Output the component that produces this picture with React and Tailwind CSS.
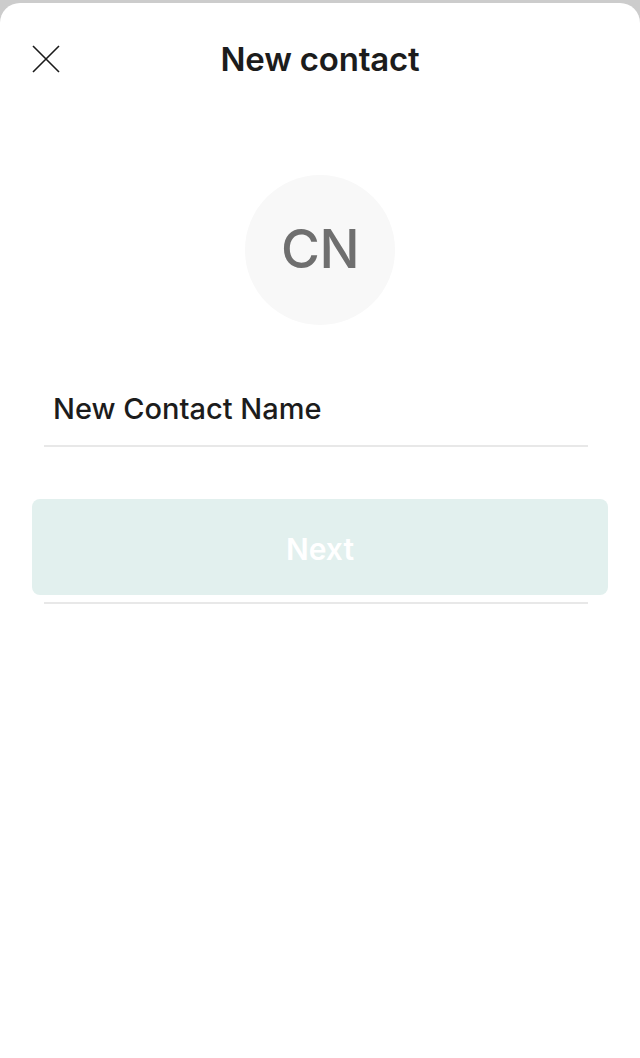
import React from 'react';

export default function App() {
  return (
    <div className="min-h-[1058px] bg-[#cccccc] pt-[3px]" style={{ fontFamily: 'Inter, "Noto Sans", sans-serif' }}>
      {/* Sheet */}
      <div className="min-h-[1055px] bg-white rounded-t-[20px] flex flex-col">
        {/* Header */}
        <div className="relative h-[112px] flex items-center justify-center">
          <button className="absolute left-[32px] top-[42px] w-[28px] h-[28px]" aria-label="Close">
            <svg viewBox="0 0 28 28" width="28" height="28" fill="none" stroke="#1a1a1a" strokeWidth="1.6">
              <path d="M1 1 L27 27 M27 1 L1 27" />
            </svg>
          </button>
          <h1 className="text-[33px] font-semibold text-[#1c1c1c] tracking-[-0.2px] mt-[2px]">New contact</h1>
        </div>

        {/* Avatar */}
        <div className="flex justify-center mt-[60px]">
          <div className="w-[150px] h-[150px] rounded-full bg-[#f8f8f8] flex items-center justify-center">
            <span className="text-[53px] font-medium text-[#6f6f6f] tracking-[-0.5px]">CN</span>
          </div>
        </div>

        {/* Name field */}
        <div className="ml-[44px] mr-[52px] mt-[66px] border-b-2 border-[#e8e8e8] pb-[18px] pl-[9px]">
          <span className="block text-[29px] leading-[36px] font-medium text-[#1c1c1c]">New Contact Name</span>
        </div>

        {/* Next button */}
        <div className="mx-[32px] mt-[52px]">
          <button className="w-full h-[96px] rounded-[8px] bg-[#e2f0ee] text-white text-[30px] font-semibold pt-[4px]">
            Next
          </button>
        </div>
        <div className="ml-[44px] mr-[52px] mt-[7px] border-b-2 border-[#e8e8e8]" />
      </div>
    </div>
  );
}
